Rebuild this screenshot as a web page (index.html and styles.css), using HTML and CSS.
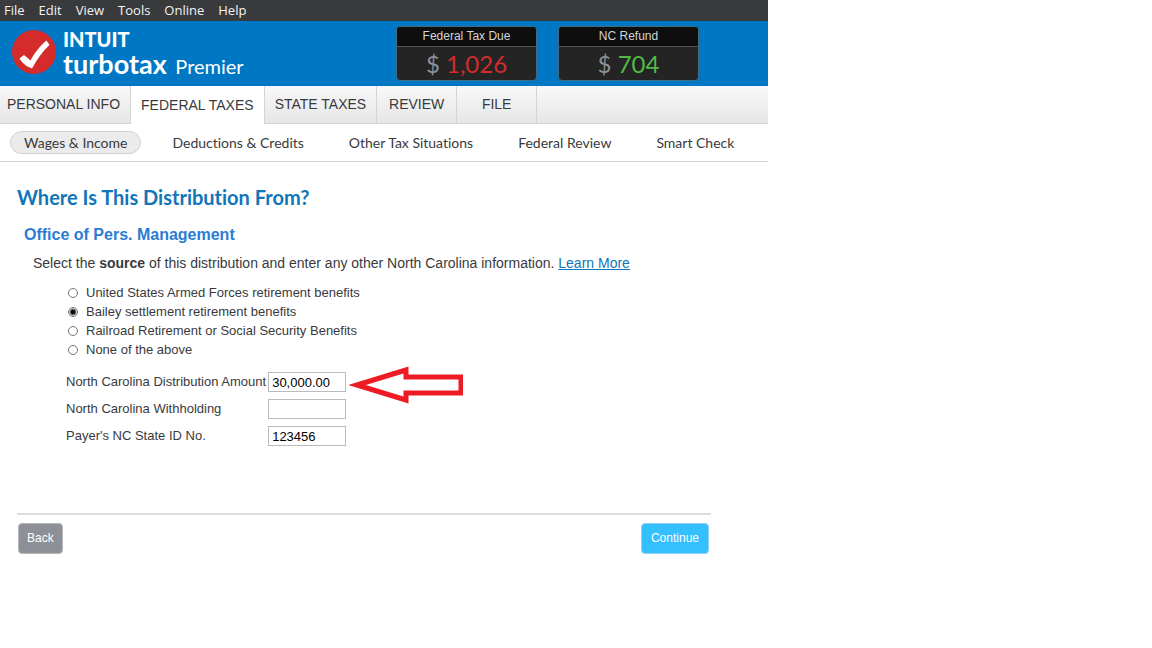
FILE: index.html
```html
<!DOCTYPE html>
<html lang="en">
<head>
    <meta charset="UTF-8">
    <meta name="viewport" content="width=device-width, initial-scale=1.0">
    <title>TurboTax Premier</title>
    <link rel="stylesheet" href="styles.css">
</head>
<body>
    <div class="app">
        <nav class="menu-bar">
            <button type="button">File</button>
            <button type="button">Edit</button>
            <button type="button">View</button>
            <button type="button">Tools</button>
            <button type="button">Online</button>
            <button type="button">Help</button>
        </nav>

        <header class="header">
            <div class="brand">
                <svg class="brand-icon" viewBox="0 0 44 44" aria-hidden="true">
                    <circle cx="22" cy="22" r="22" fill="#d52b2a"/>
                    <path d="M7.500 28.500 L12 25 L18.500 30.500 C23 22 28 16 34.500 10.500 L37.500 15 C31 21 25 29 20 38.500 C15.500 37 11 34 7.500 28.500 Z" fill="#fff"/>
                </svg>
                <div class="brand-text">
                    <div class="brand-company">INTUIT</div>
                    <div class="brand-product">turbotax <span class="brand-edition">Premier</span></div>
                </div>
            </div>

            <div class="totals">
                <div class="total">
                    <div class="total-label">Federal Tax Due</div>
                    <div class="total-value due"><span class="currency">$</span> 1,026</div>
                </div>
                <div class="total">
                    <div class="total-label">NC Refund</div>
                    <div class="total-value refund"><span class="currency">$</span> 704</div>
                </div>
            </div>
        </header>

        <nav class="tabs">
            <a href="#" class="tab">PERSONAL INFO</a>
            <a href="#" class="tab active">FEDERAL TAXES</a>
            <a href="#" class="tab">STATE TAXES</a>
            <a href="#" class="tab tab-short">REVIEW</a>
            <a href="#" class="tab tab-short">FILE</a>
        </nav>

        <nav class="sub-nav">
            <a href="#" class="active">Wages &amp; Income</a>
            <a href="#">Deductions &amp; Credits</a>
            <a href="#">Other Tax Situations</a>
            <a href="#">Federal Review</a>
            <a href="#">Smart Check</a>
        </nav>

        <main class="content">
            <h1>Where Is This Distribution From?</h1>
            <h2>Office of Pers. Management</h2>

            <form>
                <p class="intro">Select the <b>source</b> of this distribution and enter any other North Carolina information. <a href="#">Learn More</a></p>

                <div class="options">
                    <label><input type="radio" name="source"> United States Armed Forces retirement benefits</label>
                    <label><input type="radio" name="source" checked> Bailey settlement retirement benefits</label>
                    <label><input type="radio" name="source"> Railroad Retirement or Social Security Benefits</label>
                    <label><input type="radio" name="source"> None of the above</label>
                </div>

                <div class="fields">
                    <label for="amount">North Carolina Distribution Amount</label>
                    <div class="field">
                        <input type="text" id="amount" value="30,000.00">
                        <svg class="arrow" viewBox="0 0 114 38" aria-hidden="true">
                            <path d="M8 19 L57 4 V11 H112 V27 H57 V34 Z" fill="#fff" stroke="#ed1c24" stroke-width="5"/>
                        </svg>
                    </div>
                    <label for="withholding">North Carolina Withholding</label>
                    <input type="text" id="withholding">
                    <label for="stateId">Payer's NC State ID No.</label>
                    <input type="text" id="stateId" value="123456">
                </div>

                <div class="actions">
                    <button type="button" class="btn back">Back</button>
                    <button type="submit" class="btn continue">Continue</button>
                </div>
            </form>
        </main>
    </div>
</body>
</html>
```
FILE: styles.css
```css
* {
    margin: 0;
    padding: 0;
    box-sizing: border-box;
}

body {
    background-color: #fff;
    color: #393a3d;
    font-family: "Liberation Sans", Arial, sans-serif;
    font-size: 13px;
    font-variant-ligatures: none;
}

a {
    color: inherit;
    text-decoration: none;
}

.app {
    width: 100%;
    max-width: 768px;
}

/* Menu bar */
.menu-bar {
    display: flex;
    gap: 14px;
    padding: 0 4px;
    background-color: #393a3c;
}

.menu-bar button {
    border: none;
    background: none;
    color: #f4f4f4;
    font-family: "Open Sans", sans-serif;
    font-size: 13px;
    line-height: 21px;
}

/* Header */
.header {
    display: flex;
    justify-content: space-between;
    padding: 5px 69px 5px 12px;
    background-color: #0077c5;
    color: #fff;
}

.brand {
    display: flex;
    gap: 7px;
    padding-top: 4px;
}

.brand-icon {
    width: 44px;
    height: 44px;
}

.brand-text {
    font-family: Lato, sans-serif;
}

.brand-company {
    font-size: 20px;
    font-weight: 900;
    line-height: 18px;
}

.brand-product {
    font-size: 27px;
    font-weight: 700;
    line-height: 32px;
}

.brand-edition {
    margin-left: 2px;
    font-size: 20px;
    font-weight: 400;
    line-height: 20px;
}

.totals {
    display: flex;
    gap: 21px;
}

.total {
    width: 141px;
    border: 1px solid #3f6d86;
    border-radius: 4px;
    background-color: #242424;
    text-align: center;
    overflow: hidden;
}

.total-label {
    border-bottom: 1px solid #555;
    background-color: #0e0e0e;
    color: #d4d4d4;
    font-size: 12px;
    line-height: 19px;
}

.total-value {
    font-family: Lato, sans-serif;
    font-size: 24px;
    line-height: 33px;
}

.currency {
    color: #8d9096;
}

.due {
    color: #d52b2a;
}

.refund {
    color: #53b848;
}

/* Main tabs */
.tabs {
    display: flex;
    background: linear-gradient(#f8f8f8, #e6e6e6);
    border-bottom: 1px solid #d4d4d4;
}

.tab {
    padding: 0 10px;
    border-right: 1px solid #d4d4d4;
    font-size: 14px;
    line-height: 37px;
}

.tab:first-child {
    padding-left: 7px;
}

.tab.active {
    margin-bottom: -1px;
    background-color: #fff;
    line-height: 38px;
}

.tab-short {
    width: 80px;
    text-align: center;
}

/* Section links */
.sub-nav {
    display: flex;
    gap: 17px;
    padding: 7px 10px;
    border-bottom: 1px solid #d4d4d4;
}

.sub-nav a {
    padding: 0 13px;
    border: 1px solid transparent;
    border-radius: 12px;
    font-family: Lato, sans-serif;
    font-size: 14px;
    line-height: 21px;
}

.sub-nav a.active {
    border-color: #d0d0d0;
    background-color: #ebebeb;
}

/* Page content */
.content {
    padding: 22px 57px 24px 17px;
}

h1 {
    color: #1075b9;
    font-family: Lato, sans-serif;
    font-size: 20px;
    line-height: 26px;
}

h2 {
    margin: 15px 0 0 7px;
    color: #2b7cd3;
    font-size: 16px;
    line-height: 20px;
}

.intro {
    margin: 8px 0 0 16px;
    font-size: 14px;
    line-height: 20px;
}

.intro a {
    color: #1075b9;
    text-decoration: underline;
}

.options {
    display: flex;
    flex-direction: column;
    margin: 10px 0 0 51px;
}

.options label {
    display: flex;
    align-items: center;
    gap: 8px;
    line-height: 19px;
}

.options input {
    appearance: none;
    width: 10px;
    height: 10px;
    border: 1px solid #767676;
    border-radius: 50%;
    background-color: #fff;
}

.options input:checked {
    background: radial-gradient(circle, #111 2px, #fff 4px);
}

.fields {
    display: grid;
    grid-template-columns: auto auto;
    justify-content: start;
    align-items: center;
    gap: 7px 2px;
    margin: 13px 0 0 49px;
}

.fields label {
    line-height: 20px;
    white-space: nowrap;
}

.fields input {
    width: 78px;
    height: 20px;
    padding: 0 3px;
    border: 1px solid #babbbd;
    color: #000;
    font-family: inherit;
    font-size: 13px;
}

.field {
    display: flex;
    position: relative;
}

.arrow {
    position: absolute;
    top: -6px;
    left: 81px;
    width: 114px;
    height: 38px;
}

.actions {
    display: flex;
    justify-content: space-between;
    margin-top: 67px;
    padding: 8px 2px 0 1px;
    border-top: 2px solid #dcdcdc;
}

.btn {
    padding: 0 9px;
    border: 1px solid #b5b7ba;
    border-radius: 4px;
    color: #fff;
    font-family: inherit;
    font-size: 12px;
    line-height: 29px;
}

.back {
    padding: 0 8px;
    background-color: #8d9096;
}

.continue {
    border-color: #8fd4f7;
    background-color: #34bfff;
}
```
